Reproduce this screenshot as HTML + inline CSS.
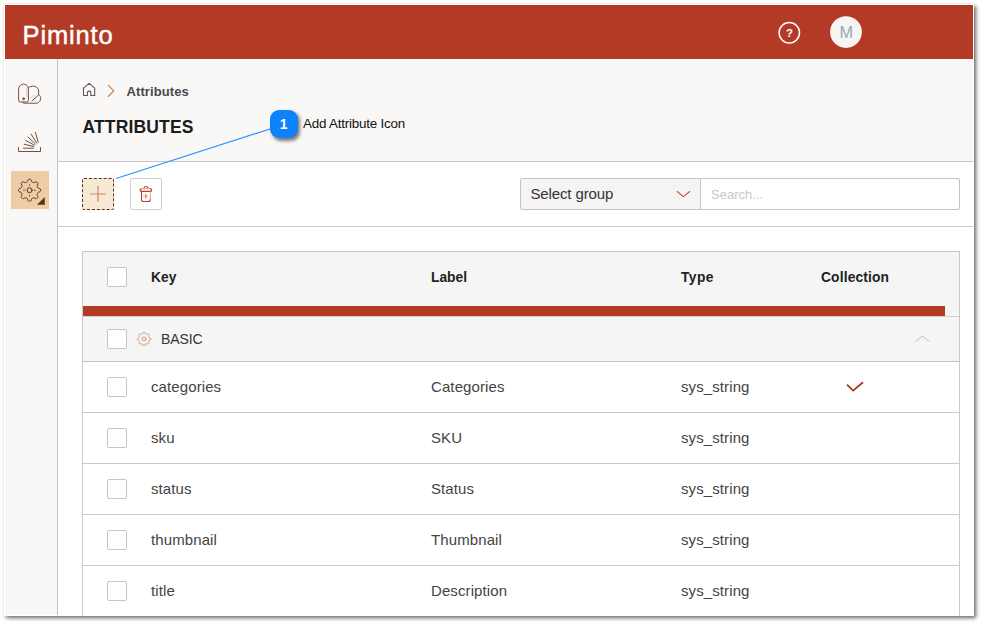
<!DOCTYPE html>
<html lang="en">
<head>
<meta charset="utf-8">
<title>Piminto - Attributes</title>
<style>
*{box-sizing:border-box;margin:0;padding:0}
html,body{width:983px;height:625px;background:#fff;overflow:hidden}
body{font-family:"Liberation Sans",Arial,sans-serif;color:#444;position:relative}
.frame{position:absolute;left:4px;top:4px;width:970px;height:612px;background:#fff;box-shadow:2px 2px 4px 0 rgba(0,0,0,.6)}
.clip{position:absolute;left:5px;top:5px;width:968px;height:611px;overflow:hidden;background:#fff}
.abs{position:absolute;left:-5px;top:-5px;width:983px;height:625px}
.abs *{position:absolute}
.topbar{left:5px;top:5px;width:968px;height:54px;background:#b33b26}
.brand{left:22.6px;top:20.1px;font-size:25.5px;line-height:30px;color:#fff;letter-spacing:.85px;white-space:nowrap;-webkit-text-stroke:.45px #fff}
.side{left:5px;top:59px;width:53px;height:556px;background:#f9f8f7;border-right:1px solid #c0c3c1}
.phead{left:58px;top:59px;width:915px;height:103px;background:#f9f8f7;border-bottom:1px solid #c6c6c6}
.tool{left:58px;top:162px;width:915px;height:65px;background:#fff;border-bottom:1px solid #c9c9c9}
.crumb{left:126.5px;top:83.6px;font-size:13px;line-height:16px;font-weight:700;color:#4a4a4a;white-space:nowrap;letter-spacing:.1px}
.title{left:82.5px;top:116px;font-size:17.5px;line-height:22px;font-weight:700;color:#1c1c1c;white-space:nowrap;letter-spacing:.15px}
.tile{left:11px;top:171px;width:38px;height:38px;background:#f0cca6}
.btn{top:178px;width:32px;height:32px;border-radius:2px}
.add{left:82px;background:#f7ead5;border:1px dashed #5c3412}
.del{left:130px;background:#fff;border:1px solid #cfcfcf}
.sel{left:520px;top:178px;width:181px;height:32px;background:#f5f4f3;border:1px solid #c4c4c4;border-radius:2px 0 0 2px}
.sel span{left:9.4px;top:6px;font-size:15px;line-height:18px;color:#333;white-space:nowrap;letter-spacing:-.12px}
.srch{left:700px;top:178px;width:260px;height:32px;background:#fff;border:1px solid #c4c4c4;border-radius:0 2px 2px 0}
.srch span{left:10px;top:8px;font-size:13px;line-height:15px;color:#c8c8c8;white-space:nowrap}
.table{left:82px;top:251px;width:878px;height:380px;border:1px solid #c9c9c9;background:#fff}
.thead{left:83px;top:252px;width:876px;height:64px;background:#f5f5f5}
.redbar{left:83px;top:306px;width:862px;height:10px;background:#b33b26}
.grow{left:83px;top:316px;width:876px;height:46px;background:#f5f5f5;border-top:1px solid #d0d0d0;border-bottom:1px solid #c4c4c4}
.hl{left:83px;width:876px;height:1px;background:#c9c9c9}
.cb{left:107px;width:20px;height:20px;border:1px solid #c6c6c6;border-radius:2px;background:#fff}
.th{top:269.3px;font-size:13.8px;line-height:18px;font-weight:700;color:#222;white-space:nowrap}
.td{font-size:15px;line-height:18px;color:#444;white-space:nowrap;letter-spacing:.1px}
.badge{left:270px;top:110px;width:28px;height:28px;border-radius:9px;background:#0d82fa;box-shadow:2px 2.5px 3.5px rgba(0,0,0,.5);color:#fff;font-weight:700;font-size:14px;line-height:28px;text-align:center;text-indent:-.5px}
.ctext{left:303px;top:116.4px;font-size:13.4px;line-height:16px;color:#111;white-space:nowrap;letter-spacing:-.2px}
svg{overflow:visible}
.q{left:784px;top:24.6px;width:11px;text-align:center;font-size:11.5px;line-height:16px;font-weight:700;color:#fff}
.av{left:836.2px;top:22.9px;width:20px;text-align:center;font-size:16.3px;line-height:18px;color:#9aa6b4}
</style>
</head>
<body>
<div class="frame"></div>
<div class="clip"><div class="abs">
  <div class="topbar"></div>
  <div class="brand">Piminto</div>
  <svg style="left:0;top:0" width="983" height="625" viewBox="0 0 983 625">
    <circle cx="789.3" cy="32.8" r="10.2" fill="none" stroke="#fff" stroke-width="1.5"/>
    <circle cx="846" cy="32.1" r="15.9" fill="#f5f5f5"/>
  </svg>
  <div class="q">?</div>
  <div class="av">M</div>
  <div class="side"></div>
  <div class="phead"></div>
  <div class="tool"></div>
  <div class="tile"></div>
  <svg style="left:0;top:0" width="983" height="625" viewBox="0 0 983 625" fill="none" stroke="#75503a" stroke-width="1" stroke-linecap="round" stroke-linejoin="round">
    <!-- swatch icon -->
    <path d="M18.6 89a4.9 4.9 0 0 1 9.8 0V100.4a1.6 1.6 0 0 1-1.6 1.6H20.2a1.6 1.6 0 0 1-1.6-1.6Z"/>
    <circle cx="23.6" cy="98.8" r="1" fill="#8a5a3a" stroke-width=".8"/>
    <path d="M26.6 89.2v7" stroke="#c06a5a" stroke-width="1" stroke-dasharray="0.7 1.4" stroke-linecap="butt"/>
    <path d="M28.6 87.6C30 86.5 32 86 33.8 86.2C36.8 86.6 38.6 88.6 38.7 91V94.8L31.9 100.9"/>
    <path d="M38.7 94.9C40 95.6 40.8 96.8 40.7 98.4C40.5 101 39 102.7 37 103.2H23.8L22.4 102.1"/>
    <path d="M31 98l3.2-3.2" stroke="#9a7ab0" stroke-width=".8" stroke-dasharray=".7 1.1" stroke-linecap="butt"/>
    <path d="M34.2 100.6h3" stroke="#9ab0d0" stroke-width=".9" stroke-dasharray=".7 .8" stroke-linecap="butt"/>
    <!-- stack icon -->
    <path d="M18.5 147.5v4h22v-4"/>
    <path d="M23.4 148.2h10"/>
    <path d="M24.2 144.2l9.5 2.4"/>
    <path d="M25.6 140.4l8.8 4.8"/>
    <path d="M28 137l7.4 7"/>
    <path d="M31.2 134.2l5.4 8.8"/>
    <path d="M35.4 132.4l2.8 10"/>
    <!-- gear -->
    <path d="M40.60 190.20 L40.56 190.74 L40.41 191.26 L39.92 191.73 L38.93 192.06 L38.13 192.34 L37.80 192.69 L37.61 193.07 L37.45 193.45 L37.29 193.84 L37.16 194.24 L37.15 194.72 L37.51 195.48 L37.98 196.42 L37.99 197.09 L37.73 197.57 L37.38 197.98 L36.97 198.33 L36.49 198.59 L35.82 198.58 L34.88 198.11 L34.12 197.75 L33.64 197.76 L33.24 197.89 L32.85 198.05 L32.47 198.21 L32.09 198.40 L31.74 198.73 L31.46 199.53 L31.13 200.52 L30.66 201.01 L30.14 201.16 L29.60 201.20 L29.06 201.16 L28.54 201.01 L28.07 200.52 L27.74 199.53 L27.46 198.73 L27.11 198.40 L26.73 198.21 L26.35 198.05 L25.96 197.89 L25.56 197.76 L25.08 197.75 L24.32 198.11 L23.38 198.58 L22.71 198.59 L22.23 198.33 L21.82 197.98 L21.47 197.57 L21.21 197.09 L21.22 196.42 L21.69 195.48 L22.05 194.72 L22.04 194.24 L21.91 193.84 L21.75 193.45 L21.59 193.07 L21.40 192.69 L21.07 192.34 L20.27 192.06 L19.28 191.73 L18.79 191.26 L18.64 190.74 L18.60 190.20 L18.64 189.66 L18.79 189.14 L19.28 188.67 L20.27 188.34 L21.07 188.06 L21.40 187.71 L21.59 187.33 L21.75 186.95 L21.91 186.56 L22.04 186.16 L22.05 185.68 L21.69 184.92 L21.22 183.98 L21.21 183.31 L21.47 182.83 L21.82 182.42 L22.23 182.07 L22.71 181.81 L23.38 181.82 L24.32 182.29 L25.08 182.65 L25.56 182.64 L25.96 182.51 L26.35 182.35 L26.73 182.19 L27.11 182.00 L27.46 181.67 L27.74 180.87 L28.07 179.88 L28.54 179.39 L29.06 179.24 L29.60 179.20 L30.14 179.24 L30.66 179.39 L31.13 179.88 L31.46 180.87 L31.74 181.67 L32.09 182.00 L32.47 182.19 L32.85 182.35 L33.24 182.51 L33.64 182.64 L34.12 182.65 L34.88 182.29 L35.82 181.82 L36.49 181.81 L36.97 182.07 L37.38 182.42 L37.73 182.83 L37.99 183.31 L37.98 183.98 L37.51 184.92 L37.15 185.68 L37.16 186.16 L37.29 186.56 L37.45 186.95 L37.61 187.33 L37.80 187.71 L38.13 188.06 L38.93 188.34 L39.92 188.67 L40.41 189.14 L40.56 189.66Z" stroke="#503828" stroke-width="1"/>
    <circle cx="29.6" cy="190.2" r="2.5" stroke="#503828" stroke-width="1"/>
    <path d="M29.6 183.8v2.2M29.6 194.4v2.2M23.2 190.2h2.2M33.8 190.2h2.2" stroke="#8a4a5a" stroke-width=".9" stroke-linecap="butt"/>
    <path d="M44.8 197v7.8h-7.8z" fill="#5a3414" stroke="none"/>
  </svg>
  <div class="crumb">Attributes</div>
  <div class="title">ATTRIBUTES</div>
  <svg style="left:0;top:0" width="983" height="625" viewBox="0 0 983 625" fill="none" stroke-linecap="round" stroke-linejoin="round">
    <path d="M83.5 95.5V88.2L89.1 83.3L94.7 88.2V95.5H90.8V92.8a1.7 1.7 0 0 0-3.4 0V95.5Z" stroke="#5b5560" stroke-width="1.1"/>
    <path d="M108.3 85.3L113.8 90.8L108.3 96.4" stroke="#c8703c" stroke-width="1.1"/>
  </svg>
  <div class="btn add"></div>
  <div class="btn del"></div>
  <svg style="left:0;top:0" width="983" height="625" viewBox="0 0 983 625" fill="none" stroke-linecap="round" stroke-linejoin="round">
    <path d="M90 194h16M98 186v16" stroke="#d08560" stroke-width="1.2" stroke-linecap="butt"/>
    <g stroke="#bb3f28" stroke-width="1.1">
      <path d="M144 188.5a2 2 0 0 1 4 0"/>
      <path d="M141.2 188.8h9.4" stroke="#dba090" stroke-width=".9"/>
      <path d="M141.4 191.4h9a1.3 1.3 0 0 0 0-2.6M141.4 191.4a1.3 1.3 0 0 1 0-2.6"/>
      <path d="M141.5 191.2V199.5a2 2 0 0 0 2 2h4.8a2 2 0 0 0 2-2" />
      <path d="M150.3 191.4V199.5" stroke="#c66a50" stroke-dasharray="1.1 .7" stroke-linecap="butt"/>
      <path d="M145.8 193.9v4.6" stroke="#d98a3a" stroke-width="1.2" stroke-linecap="butt"/>
      <path d="M143.6 196.2h4.4" stroke="#e0a070" stroke-width="2.2" stroke-dasharray=".6 .5" stroke-linecap="butt"/>
    </g>
  </svg>
  <div class="sel"><span>Select group</span></div>
  <div class="srch"><span>Search...</span></div>
  <div class="table"></div>
  <div class="thead"></div>
  <div class="grow"></div>
  <div class="redbar"></div>
  <div class="cb" style="top:267px"></div>
  <div class="cb" style="top:329px"></div>
  <div class="cb" style="top:377px"></div>
  <div class="cb" style="top:428px"></div>
  <div class="cb" style="top:479px"></div>
  <div class="cb" style="top:530px"></div>
  <div class="cb" style="top:581px"></div>
  <div class="hl" style="top:412px"></div>
  <div class="hl" style="top:463px"></div>
  <div class="hl" style="top:514px"></div>
  <div class="hl" style="top:565px"></div>
  <div class="th" style="left:151px">Key</div>
  <div class="th" style="left:431px">Label</div>
  <div class="th" style="left:681px;letter-spacing:.4px">Type</div>
  <div class="th" style="left:821px;letter-spacing:.15px">Collection</div>
  <div class="td" style="left:161px;top:330.2px;font-size:14px;letter-spacing:-.1px;color:#333">BASIC</div>
  <div class="td" style="left:151px;top:378px">categories</div>
  <div class="td" style="left:431px;top:378px">Categories</div>
  <div class="td" style="left:681px;top:378px">sys_string</div>
  <div class="td" style="left:151px;top:429px">sku</div>
  <div class="td" style="left:431px;top:429px">SKU</div>
  <div class="td" style="left:681px;top:429px">sys_string</div>
  <div class="td" style="left:151px;top:480px">status</div>
  <div class="td" style="left:431px;top:480px">Status</div>
  <div class="td" style="left:681px;top:480px">sys_string</div>
  <div class="td" style="left:151px;top:531px">thumbnail</div>
  <div class="td" style="left:431px;top:531px">Thumbnail</div>
  <div class="td" style="left:681px;top:531px">sys_string</div>
  <div class="td" style="left:151px;top:582px">title</div>
  <div class="td" style="left:431px;top:582px">Description</div>
  <div class="td" style="left:681px;top:582px">sys_string</div>
  <svg style="left:0;top:0" width="983" height="625" viewBox="0 0 983 625" fill="none" stroke-linecap="round" stroke-linejoin="round">
    <path d="M150.60 339.00 L150.59 339.32 L150.55 339.65 L150.43 339.95 L149.96 340.19 L149.29 340.32 L149.02 340.52 L148.90 340.75 L148.80 340.99 L148.71 341.23 L148.63 341.47 L148.68 341.80 L149.05 342.38 L149.22 342.87 L149.09 343.18 L148.89 343.43 L148.67 343.67 L148.43 343.89 L148.18 344.09 L147.87 344.22 L147.38 344.05 L146.80 343.68 L146.47 343.63 L146.23 343.71 L145.99 343.80 L145.75 343.90 L145.52 344.02 L145.32 344.29 L145.19 344.96 L144.95 345.43 L144.65 345.55 L144.32 345.59 L144.00 345.60 L143.68 345.59 L143.35 345.55 L143.05 345.43 L142.81 344.96 L142.68 344.29 L142.48 344.02 L142.25 343.90 L142.01 343.80 L141.77 343.71 L141.53 343.63 L141.20 343.68 L140.62 344.05 L140.13 344.22 L139.82 344.09 L139.57 343.89 L139.33 343.67 L139.11 343.43 L138.91 343.18 L138.78 342.87 L138.95 342.38 L139.32 341.80 L139.37 341.47 L139.29 341.23 L139.20 340.99 L139.10 340.75 L138.98 340.52 L138.71 340.32 L138.04 340.19 L137.57 339.95 L137.45 339.65 L137.41 339.32 L137.40 339.00 L137.41 338.68 L137.45 338.35 L137.57 338.05 L138.04 337.81 L138.71 337.68 L138.98 337.48 L139.10 337.25 L139.20 337.01 L139.29 336.77 L139.37 336.53 L139.32 336.20 L138.95 335.62 L138.78 335.13 L138.91 334.82 L139.11 334.57 L139.33 334.33 L139.57 334.11 L139.82 333.91 L140.13 333.78 L140.62 333.95 L141.20 334.32 L141.53 334.37 L141.77 334.29 L142.01 334.20 L142.25 334.10 L142.48 333.98 L142.68 333.71 L142.81 333.04 L143.05 332.57 L143.35 332.45 L143.68 332.41 L144.00 332.40 L144.32 332.41 L144.65 332.45 L144.95 332.57 L145.19 333.04 L145.32 333.71 L145.52 333.98 L145.75 334.10 L145.99 334.20 L146.23 334.29 L146.47 334.37 L146.80 334.32 L147.38 333.95 L147.87 333.78 L148.18 333.91 L148.43 334.11 L148.67 334.33 L148.89 334.57 L149.09 334.82 L149.22 335.13 L149.05 335.62 L148.68 336.20 L148.63 336.53 L148.71 336.77 L148.80 337.01 L148.90 337.25 L149.02 337.48 L149.29 337.68 L149.96 337.81 L150.43 338.05 L150.55 338.35 L150.59 338.68Z" stroke="#d09a7c" stroke-width="1"/>
    <circle cx="144" cy="339" r="1.9" stroke="#d09a7c" stroke-width="1"/>
    <path d="M677.2 191.5L683.4 196.7L689.7 191.5" stroke="#c04a48" stroke-width="1.05"/>
    <path d="M916.2 341.2L922.4 335.9L928.7 341.2" stroke="#c9c9c9" stroke-width="1.1"/>
    <path d="M847 384.6L853.1 390.6L863 382.2" stroke="#b3341f" stroke-width="1.8" stroke-linecap="butt" stroke-linejoin="miter"/>
  </svg>
  <svg style="left:0;top:0" width="983" height="625" viewBox="0 0 983 625">
    <path d="M116 178.6L284 124.4" stroke="#2a92ff" stroke-width="1.1" fill="none"/>
  </svg>
  <div class="badge">1</div>
  <div class="ctext">Add Attribute Icon</div>
</div></div>
</body>
</html>
